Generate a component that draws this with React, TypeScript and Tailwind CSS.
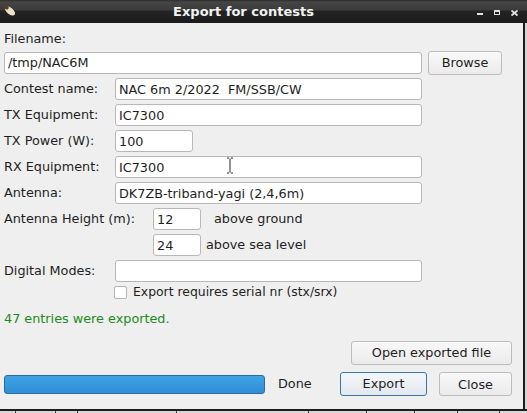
import React from "react";

const font = { fontFamily: '"DejaVu Sans", "Liberation Sans", sans-serif' };

const TextBox: React.FC<{ value: string; width: string }> = ({ value, width }) => (
  <input
    readOnly
    value={value}
    className={`${width} h-[22px] bg-white border border-[#b8b8b8] rounded-[3px] px-[3px] text-[12.8px] text-[#1e1e1e] outline-none`}
  />
);

const Button: React.FC<{ label: string; width: string; primary?: boolean }> = ({ label, width, primary }) => (
  <button
    type="button"
    className={`${width} h-[24px] rounded-[3px] border text-[12.8px] text-[#1e1e1e] ${
      primary
        ? "border-[#3b74a6] bg-[linear-gradient(#f4f7fa,#e2e8ee)]"
        : "border-[#bcbcbc] bg-[linear-gradient(#f8f8f8,#ebebeb)]"
    }`}
  >
    {label}
  </button>
);

const Row: React.FC<{ label: string; children: React.ReactNode }> = ({ label, children }) => (
  <div className="flex items-center h-[22px]">
    <span className="w-[111px] text-[12.8px] text-[#1e1e1e]">{label}</span>
    {children}
  </div>
);

export default function App() {
  return (
    <div className="w-[527px] h-[413px] overflow-hidden bg-[#1c1c1c] flex flex-col" style={font}>
      {/* title bar */}
      <div className="relative h-[23px] flex items-center justify-center bg-[linear-gradient(#2c2c2c_0px,#464646_2px,#3b3b3b_10px,#232323_11px,#1c1c1c_23px)]">
        <svg className="absolute left-[2px] top-[3px]" width="14" height="14" viewBox="0 0 14 14">
          <ellipse cx="8" cy="8" rx="6" ry="3.2" transform="rotate(40 8 8)" fill="#efe3c6" />
          <ellipse cx="4" cy="4" rx="3" ry="2" transform="rotate(40 4 4)" fill="#5a3a2a" />
        </svg>
        <span className="text-[13px] font-bold text-[#f2f2f2] ml-[-40px]">Export for contests</span>
        <div className="absolute left-[477px] top-[13px] w-[6px] h-[2px] bg-[#e0e0e0]" />
        <div className="absolute left-[494px] top-[10px] w-[6px] h-[5px] border border-t-2 border-[#e0e0e0]" />
        <svg className="absolute left-[511px] top-[10px]" width="7" height="6" viewBox="0 0 7 6">
          <path d="M0.5 0.5 L6.5 5.5 M6.5 0.5 L0.5 5.5" stroke="#e6e6e6" strokeWidth="1.8" />
        </svg>
      </div>

      <div className="flex h-[386px]">
        {/* dialog body */}
        <div className="relative w-[523px] bg-[#efefef] pl-[4px] flex flex-col text-[#1e1e1e]">
          <div className="mt-[8px] h-[16px] leading-[16px] text-[12.8px]">Filename:</div>
          <div className="mt-[3px] h-[25px] flex items-center">
            <TextBox value="/tmp/NAC6M" width="w-[418px]" />
            <div className="ml-[6px]">
              <Button label="Browse" width="w-[74px]" />
            </div>
          </div>

          <div className="mt-[3px] flex flex-col gap-[4px]">
            <Row label="Contest name:">
              <TextBox value="NAC 6m 2/2022  FM/SSB/CW" width="w-[307px]" />
            </Row>
            <Row label="TX Equipment:">
              <TextBox value="IC7300" width="w-[307px]" />
            </Row>
            <Row label="TX Power (W):">
              <TextBox value="100" width="w-[78px]" />
            </Row>
            <Row label="RX Equipment:">
              <TextBox value="IC7300" width="w-[307px]" />
            </Row>
            <Row label="Antenna:">
              <TextBox value="DK7ZB-triband-yagi (2,4,6m)" width="w-[307px]" />
            </Row>
            <div className="flex items-center h-[22px]">
              <span className="w-[149px] text-[12.8px]">Antenna Height (m):</span>
              <TextBox value="12" width="w-[48px]" />
              <span className="ml-[13px] text-[12.8px]">above ground</span>
            </div>
            <div className="flex items-center h-[22px]">
              <span className="w-[149px]" />
              <TextBox value="24" width="w-[48px]" />
              <span className="ml-[5px] text-[12.8px]">above sea level</span>
            </div>
            <Row label="Digital Modes:">
              <TextBox value="" width="w-[307px]" />
            </Row>
          </div>

          <div className="mt-[4px] h-[13px] flex items-center pl-[110px]">
            <div className="w-[13px] h-[13px] bg-white border border-[#b4b4b4] rounded-[2px]" />
            <span className="ml-[6px] text-[12.4px]">Export requires serial nr (stx/srx)</span>
          </div>

          <div className="mt-[12px] h-[16px] leading-[16px] text-[12.8px] text-[#1b8a1b]">
            47 entries were exported.
          </div>

          <div className="mt-[14px] flex justify-end pr-[11px]">
            <Button label="Open exported file" width="w-[161px]" />
          </div>

          <div className="mt-[7px] flex items-center h-[24px]">
            <div className="w-[261px] h-[19px] rounded-[3px] border border-[#2a6ca3] bg-[linear-gradient(#3fa3e6,#2f8ed5)]" />
            <span className="ml-[13px] w-[62px] text-[12.8px]">Done</span>
            <Button label="Export" width="w-[87px]" primary />
            <div className="ml-[12px]">
              <Button label="Close" width="w-[73px]" />
            </div>
          </div>

          {/* mouse text cursor */}
          <svg className="absolute left-[226px] top-[134px]" width="8" height="17" viewBox="0 0 8 17">
            <path d="M1 1 H3 M5 1 H7 M4 1.5 V15.5 M1 16 H3 M5 16 H7" stroke="#fff" strokeWidth="2.2" />
            <path d="M1 1 H3 M5 1 H7 M4 1.5 V15.5 M1 16 H3 M5 16 H7" stroke="#222" strokeWidth="1" />
          </svg>
        </div>
        <div className="ml-[2px] w-[2px] bg-[#d6d6d6]" />
      </div>

      <div className="mt-[2px] flex-1 bg-[#d9d9d9] relative">
        <div className="absolute left-[15px] top-0 w-px h-full bg-[#444]" />
        <div className="absolute left-[55px] top-0 w-px h-full bg-[#444]" />
        <div className="absolute left-[77px] top-0 w-px h-full bg-[#444]" />
        <div className="absolute left-[176px] top-0 w-px h-full bg-[#444]" />
        <div className="absolute left-[308px] top-0 w-px h-full bg-[#444]" />
        <div className="absolute left-[366px] top-0 w-px h-full bg-[#444]" />
        <div className="absolute left-[414px] top-0 w-px h-full bg-[#444]" />
        <div className="absolute left-[457px] top-0 w-px h-full bg-[#444]" />
        <div className="absolute left-[499px] top-0 w-px h-full bg-[#444]" />
      </div>
    </div>
  );
}
